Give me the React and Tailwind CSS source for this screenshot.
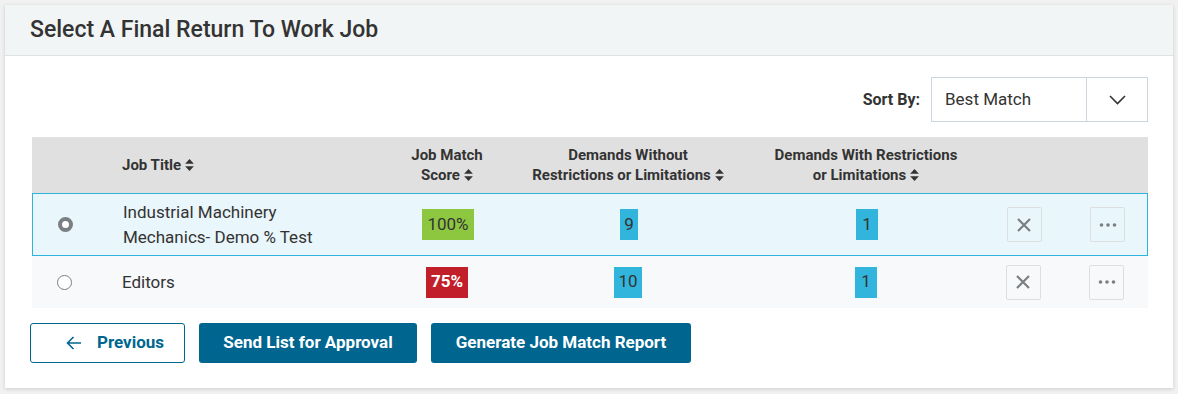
import React from "react";

const SortIcon = () => (
  <svg width="9" height="12" viewBox="0 0 8 11" className="inline-block ml-[4px] -mt-[2px]" fill="#333">
    <path d="M4 0 L8 4.3 H0 Z" />
    <path d="M4 11 L8 6.7 H0 Z" />
  </svg>
);

const XIcon = () => (
  <svg width="14" height="14" viewBox="0 0 14 14" stroke="#7a7f83" strokeWidth="2.2" strokeLinecap="butt">
    <path d="M1 1 L13 13 M13 1 L1 13" />
  </svg>
);

const Dots = () => (
  <svg width="18" height="4" viewBox="0 0 18 4" fill="#7a7f83">
    <circle cx="2.5" cy="2" r="1.8" />
    <circle cx="9" cy="2" r="1.8" />
    <circle cx="15.5" cy="2" r="1.8" />
  </svg>
);

const Radio = ({ checked }) =>
  checked ? (
    <span className="block w-[15px] h-[15px] rounded-full border-[4px] border-[#7a7f83] bg-white" />
  ) : (
    <span className="block w-[15px] h-[15px] rounded-full border border-[#7a7f83] bg-white" />
  );

const cols = "grid grid-cols-[64px_296px_110px_252px_224px_90px_80px]";

const Row = ({ checked, title, score, scoreBg, scoreText, without, withR, className }) => (
  <div className={`${cols} items-center ${className}`}>
    <div className="flex justify-center">
      <Radio checked={checked} />
    </div>
    <div className="pl-[26px] text-[17px] leading-[25px] text-[#333]">{title}</div>
    <div className="flex justify-center">
      <span className={`h-[31px] flex items-center px-[5px] text-[17px] ${scoreBg} ${scoreText}`}>{score}</span>
    </div>
    <div className="flex justify-center">
      <span className="h-[31px] flex items-center px-[4px] text-[17px] bg-[#31b5dc] text-[#333]">{without}</span>
    </div>
    <div className="flex justify-center">
      <span className="h-[31px] flex items-center px-[6px] text-[17px] bg-[#31b5dc] text-[#333]">{withR}</span>
    </div>
    <div className="flex justify-center">
      <button className="w-[35px] h-[35px] flex items-center justify-center border border-[#dcdfe1] rounded-[2px]">
        <XIcon />
      </button>
    </div>
    <div className="flex justify-start pl-[21px]">
      <button className="w-[35px] h-[35px] flex items-center justify-center border border-[#dcdfe1] rounded-[2px]">
        <Dots />
      </button>
    </div>
  </div>
);

export default function App() {
  return (
    <div className="w-[1178px] h-[394px] bg-[#f1f1f1] p-[5px] font-['Roboto',sans-serif]">
      <div className="w-[1168px] h-[383px] bg-white shadow-[0_1px_4px_rgba(0,0,0,0.15)] flex flex-col">
        <div className="h-[51px] bg-[#f1f5f5] border-b border-[#dde2e2] flex items-center px-[25px]">
          <h1 className="text-[23px] font-medium text-[#333]">Select A Final Return To Work Job</h1>
        </div>
        <div className="px-[25px] pt-[21px]">
          <div className="flex justify-end items-center gap-[11px]">
            <span className="text-[16px] font-bold text-[#333]">Sort By:</span>
            <div className="w-[217px] h-[45px] border border-[#ccd5db] flex">
              <div className="flex-1 flex items-center pl-[13px] text-[17px] text-[#333] border-r border-[#ccd5db]">Best Match</div>
              <div className="w-[60px] flex items-center justify-center">
                <svg width="17" height="10" viewBox="0 0 17 10" fill="none" stroke="#333" strokeWidth="1.6">
                  <path d="M1 1 L8.5 8.5 L16 1" />
                </svg>
              </div>
            </div>
          </div>
          <div className="mt-[15px] ml-[2px] w-[1116px]">
            <div className={`${cols} h-[56px] items-center bg-[#e0e0e0] text-[15px] font-bold text-[#333] leading-[20px]`}>
              <div />
              <div className="pl-[26px]">Job Title<SortIcon /></div>
              <div className="text-center">Job Match<br />Score<SortIcon /></div>
              <div className="text-center whitespace-nowrap">Demands Without<br />Restrictions or Limitations<SortIcon /></div>
              <div className="text-center whitespace-nowrap">Demands With Restrictions<br />or Limitations<SortIcon /></div>
              <div />
              <div />
            </div>
            <Row
              checked
              title={<>Industrial Machinery<br />Mechanics- Demo % Test</>}
              score="100%"
              scoreBg="bg-[#8dc63f]"
              scoreText="text-[#333]"
              without="9"
              withR="1"
              className="h-[63px] bg-[#e9f6fb] border border-[#2eb4dc]"
            />
            <Row
              title="Editors"
              score="75%"
              scoreBg="bg-[#c1202a]"
              scoreText="text-white font-bold"
              without="10"
              withR="1"
              className="h-[52px] bg-[#f7f9fa]"
            />
          </div>
          <div className="mt-[15px] flex gap-[14px]">
            <button className="w-[155px] h-[40px] border border-[#00668f] rounded-[3px] text-[#00668f] text-[17px] font-bold flex items-center justify-start pl-[35px] gap-[15px]">
              <svg width="16" height="14" viewBox="0 0 16 14" fill="none" stroke="#00668f" strokeWidth="1.6">
                <path d="M15 7 H1.5 M7.5 1 L1.5 7 L7.5 13" />
              </svg>
              Previous
            </button>
            <button className="w-[218px] h-[40px] bg-[#00668f] rounded-[3px] text-white text-[17px] font-bold">Send List for Approval</button>
            <button className="w-[260px] h-[40px] bg-[#00668f] rounded-[3px] text-white text-[17px] font-bold">Generate Job Match Report</button>
          </div>
        </div>
      </div>
    </div>
  );
}
